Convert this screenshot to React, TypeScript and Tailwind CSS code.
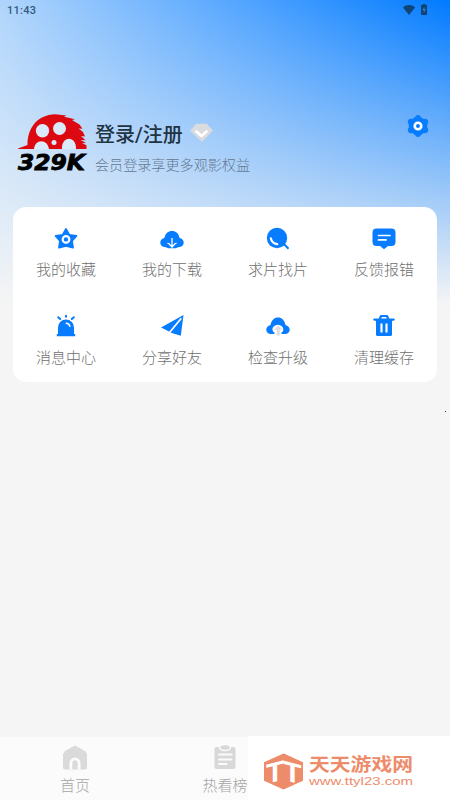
import type { ReactNode } from "react";

const blue = "#087cff";

function Icon({ children }: { children: ReactNode }) {
  return (
    <svg width="24" height="24" viewBox="0 0 24 24" fill={blue}>
      {children}
    </svg>
  );
}

const actions = [
  {
    label: "我的收藏",
    icon: (
      <Icon>
        <path
          d="M12 2l3.200 5.800 7.200 1.200-4.400 4.800 1 6.900-7-1.700-7 1.700 1-6.900L1.600 9l7.200-1.200z"
          stroke={blue}
          strokeWidth="1.800"
          strokeLinejoin="round"
        />
        <circle cx="12" cy="12.400" r="3.300" fill={blue} stroke="#fff" strokeWidth="2.200" />
      </Icon>
    ),
  },
  {
    label: "我的下载",
    icon: (
      <Icon>
        <path d="M5 20C2.200 20 .3 18.300.3 15.500c0-2.400 1.900-3.900 4.100-4.400C5.300 6.500 8.200 4 12 4s6.700 2.500 7.600 7.100c2.200.5 4.100 2 4.100 4.400 0 2.800-1.900 4.500-4.700 4.500l-3.500 1.200h-7z" />
        <path
          d="M12 11v9M7.500 16.200l1.500.5 3 3.300 3-3.300 1.500-.5"
          fill="none"
          stroke="#fff"
          strokeWidth="1.300"
        />
      </Icon>
    ),
  },
  {
    label: "求片找片",
    icon: (
      <Icon>
        <circle cx="11" cy="11" r="10.200" />
        <path d="M17 16l5.500 5.700" stroke={blue} strokeWidth="2" />
        <path
          d="M4.800 11.300c.7 3.300 2.900 5.300 6.400 5.900"
          fill="none"
          stroke="#fff"
          strokeWidth="2.200"
          strokeLinecap="round"
        />
      </Icon>
    ),
  },
  {
    label: "反馈报错",
    icon: (
      <Icon>
        <path d="M4.500 1.500h15a4 4 0 0 1 4 4V15a4 4 0 0 1-4 4H16l-4 3.300L8 19H4.500a4 4 0 0 1-4-4V5.500a4 4 0 0 1 4-4z" />
        <path
          d="M6.500 8.500h11.500M6.500 12.900h7.500"
          stroke="#fff"
          strokeWidth="1.700"
          strokeLinecap="round"
        />
      </Icon>
    ),
  },
  {
    label: "消息中心",
    icon: (
      <Icon>
        <path d="M4 20v-6.500a8 8 0 0 1 16 0V20h1.200v2.200H2.800V20z" />
        <path
          d="M12 1.800v1M4.200 3.200l2 1.800M19.800 3.200l-2 1.800"
          stroke={blue}
          strokeWidth="2"
          strokeLinecap="round"
        />
        <path
          d="M12.300 9.200c2 .1 3.200 1.300 3.500 3"
          fill="none"
          stroke="#fff"
          strokeWidth="1.600"
          strokeLinecap="round"
        />
      </Icon>
    ),
  },
  {
    label: "分享好友",
    icon: (
      <Icon>
        <path d="M23.500 1L20.800 21.800 10 18.600 8 17 1 13.500z" />
        <path d="M21.300 4.300L8.500 19.800" stroke="#fff" strokeWidth="1.700" />
        <path d="M6 16.500l3 5.500 2.800-3z" fill="#fff" />
      </Icon>
    ),
  },
  {
    label: "检查升级",
    icon: (
      <Icon>
        <path d="M5.500 20C2.400 20 .3 18.200.3 15.400c0-2.200 1.700-3.700 4.200-4.400C5.500 6 8.200 3.500 12 3.500S18.500 6 19.500 11c2.500.7 4.200 2.200 4.200 4.400 0 2.800-2.100 4.600-5.200 4.600z" />
        <path
          d="M12 10.800c3.300.2 5.300 2.300 5.300 4.700 0 1.500-.8 2.500-1.800 3V20.500h-7v-2c-1.200-.5-2-1.500-2-3 0-2.400 2.200-4.500 5.500-4.700z"
          fill="#fff"
        />
        <path d="M12.300 11.500l4.300 4.300h-2.800V21.500h-3v-5.700H8z" fill="#dedede" />
      </Icon>
    ),
  },
  {
    label: "清理缓存",
    icon: (
      <Icon>
        <path
          d="M8 4.500L9 2h6l1 2.500M2.300 5.600h19.400"
          fill="none"
          stroke={blue}
          strokeWidth="2.200"
          strokeLinecap="round"
          strokeLinejoin="round"
        />
        <path d="M4 5h16v15.500a1.500 1.500 0 0 1-1.500 1.500h-13A1.500 1.500 0 0 1 4 20.500z" />
        <path d="M9.500 9.500v9M14.500 9.500v9" stroke="#fff" strokeWidth="2.200" />
      </Icon>
    ),
  },
];

function StatusBar() {
  return (
    <div className="flex h-5 items-center justify-between pr-[22px] pl-[7px] text-[#345a7c]">
      <span className="mt-[2px] font-[Roboto,sans-serif] text-[11px] leading-5 font-medium tracking-[0.25px]">
        11:43
      </span>
      <div className="flex items-center gap-[5px]">
        <svg width="12" height="10" viewBox="0 0 12 10" fill="#104477" className="mt-[-1px]">
          <path d="M0 2.500C3.500-.7 8.500-.7 12 2.500L6 10z" />
        </svg>
        <svg width="8" height="11" viewBox="0 0 8 11" className="mt-[-2px]">
          <path d="M2.500 0h3v1H7v10H1V1h1.500z" fill="#104477" />
          <path d="M4.300 3L2.600 6.200h1.200v2.500l1.700-3.400H4.300z" fill="#4689cf" />
        </svg>
      </div>
    </div>
  );
}

function Logo() {
  return (
    <svg width="72" height="60" viewBox="0 0 72 60" className="shrink-0">
      <path
        d="M2 34.500l9.500-3.500C11.500 14 21 1 39 .3l11.500 1.200L48 2.700l11 2.500-3 .7 7.500 4.600 3 4.200-4-.3 4.500 3.600 2 4.500-4-.5 4.500 4.200-5-.2 5.500 3-4 .2 4.500 2V35H2z"
        fill="#dc0a10"
      />
      <g fill="#dbeafa">
        <circle cx="26.500" cy="16.700" r="6.700" />
        <circle cx="43.500" cy="14.500" r="6.500" />
        <circle cx="38" cy="28.500" r="2.500" />
        <path d="M18 35.500c.5-11 14-11 15 0zM46 35.500c-1-14.500 15-14.500 14 0z" />
      </g>
      <text
        x="2"
        y="55.500"
        textLength="67"
        lengthAdjust="spacingAndGlyphs"
        stroke="#000"
        strokeWidth=".8"
        className="font-['DejaVu_Sans',sans-serif] text-[21px] font-bold italic"
      >
        329K
      </text>
    </svg>
  );
}

function Gear() {
  return (
    <svg width="24" height="24" viewBox="0 0 24 24" fill={blue} className="mr-[20px]">
      <circle cx="12" cy="12" r="9.300" />
      <circle cx="12" cy="3.900" r="2.900" />
      <circle cx="12" cy="20.100" r="2.900" />
      <circle cx="4.900" cy="7.900" r="3.100" />
      <circle cx="19.100" cy="7.900" r="3.100" />
      <circle cx="4.900" cy="16.100" r="3.100" />
      <circle cx="19.100" cy="16.100" r="3.100" />
      <circle cx="12" cy="12" r="3.300" stroke="#fff" strokeWidth="2.600" />
    </svg>
  );
}

function Profile() {
  return (
    <header className="flex h-[93.500px] pl-4">
      <Logo />
      <div className="ml-[7px] flex flex-1 flex-col pt-[7px]">
        <div className="flex items-center gap-[7px]">
          <h1 className="text-[20px] leading-7 font-medium text-[#203342]">登录/注册</h1>
          <svg width="23" height="20" viewBox="0 0 23 20" className="mt-[-4px]">
            <path
              d="M6.500 1.500h10L22 7.500 12 18 1 7.500z"
              fill="#d9dbde"
              stroke="#d9dbde"
              strokeWidth="1.500"
              strokeLinejoin="round"
            />
            <path
              d="M6.500 8.500l5 4.500 5-4.500"
              fill="none"
              stroke="#fff"
              strokeWidth="2.700"
              strokeLinecap="round"
              strokeLinejoin="round"
            />
          </svg>
        </div>
        <p className="mt-[6px] text-[14.100px] leading-5 font-light text-[#64788f]">
          会员登录享更多观影权益
        </p>
      </div>
      <Gear />
    </header>
  );
}

function Actions() {
  return (
    <section className="mx-[13px] grid h-[175px] grid-cols-4 grid-rows-2 rounded-[13px] bg-white">
      {actions.map((a) => (
        <div key={a.label} className="flex flex-col items-center pt-[19.500px]">
          {a.icon}
          <span className="mt-[9.500px] text-[15px] leading-5 font-light text-[#707070]">
            {a.label}
          </span>
        </div>
      ))}
    </section>
  );
}

function TabBar() {
  return (
    <nav className="grid h-[63px] grid-cols-3 bg-[#fbfbfb] text-[15px] leading-5 font-light text-[#a5a5a5]">
      <div className="flex flex-col items-center pt-[7px]">
        <svg width="26" height="28" viewBox="0 0 26 28">
          <path
            d="M13 1.500l10 5.500 2 3v13.500a2 2 0 0 1-2 2H3a2 2 0 0 1-2-2V10l2-3z"
            fill="#dadada"
          />
          <path d="M7.500 25.500V19a5.500 5.500 0 0 1 11 0v6.500z" fill="#fbfbfb" />
          <path d="M10.300 25.500V19a2.700 2.700 0 0 1 5.400 0v6.500z" fill="#dadada" />
        </svg>
        <span className="mt-[4px]">首页</span>
      </div>
      <div className="flex flex-col items-center pt-[7px]">
        <svg width="26" height="28" viewBox="0 0 26 28">
          <rect x="2.500" y="3" width="21" height="22" rx="2" fill="#d8d8d8" />
          <ellipse
            cx="13"
            cy="3.500"
            rx="5.500"
            ry="3"
            fill="#d8d8d8"
            stroke="#fbfbfb"
            strokeWidth="1.600"
          />
          <path
            d="M7 10.500h12.500M7 15.500h12.500M7 20h7.500"
            stroke="#fbfbfb"
            strokeWidth="2"
            strokeLinecap="round"
          />
        </svg>
        <span className="mt-[4px]">热看榜</span>
      </div>
    </nav>
  );
}

function SiteBadge() {
  return (
    <div className="absolute right-0 bottom-0 flex h-16 w-[202px] bg-white pt-[17px] pl-[15px] text-[#ed8c6b]">
      <svg width="41" height="37" viewBox="0 0 41 37" fill="currentColor">
        <path d="M20.500 1.500L39 10v17L20.500 35.500 2 27V10z" stroke="currentColor" strokeWidth="2" />
        <g
          fill="#fff"
          className="font-['Liberation_Sans',sans-serif] text-[28px] font-bold"
        >
          <text
            transform="matrix(1 -.25 0 1 3 31)"
            textLength="18"
            lengthAdjust="spacingAndGlyphs"
          >
            T
          </text>
          <text
            transform="matrix(1 .25 0 1 20.500 27)"
            textLength="18"
            lengthAdjust="spacingAndGlyphs"
          >
            T
          </text>
        </g>
      </svg>
      <svg width="110" height="40" viewBox="0 0 110 40" fill="currentColor" className="ml-[5px]">
        <text
          x="0"
          y="18"
          textLength="104"
          lengthAdjust="spacingAndGlyphs"
          className="text-[18px] font-bold"
        >
          天天游戏网
        </text>
        <text
          x="0"
          y="31.500"
          textLength="104"
          lengthAdjust="spacingAndGlyphs"
          className="font-['Liberation_Sans',sans-serif] text-[11.500px]"
        >
          www.ttyl23.com
        </text>
      </svg>
    </div>
  );
}

export default function App() {
  return (
    <main className="relative flex h-[800px] w-[450px] flex-col overflow-hidden bg-[linear-gradient(to_bottom,#f5f5f500_0,#f5f5f5_305px),linear-gradient(to_right,#b0d5fc,#55a6ff_52%,#007aff)] font-[Roboto,'Noto_Sans_CJK_SC',sans-serif]">
      <StatusBar />
      <div className="h-[93.500px]" />
      <Profile />
      <Actions />
      <div className="flex flex-1 justify-end pt-[29px] pr-1">
        <span className="size-px bg-[#444]" />
      </div>
      <TabBar />
      <SiteBadge />
    </main>
  );
}
